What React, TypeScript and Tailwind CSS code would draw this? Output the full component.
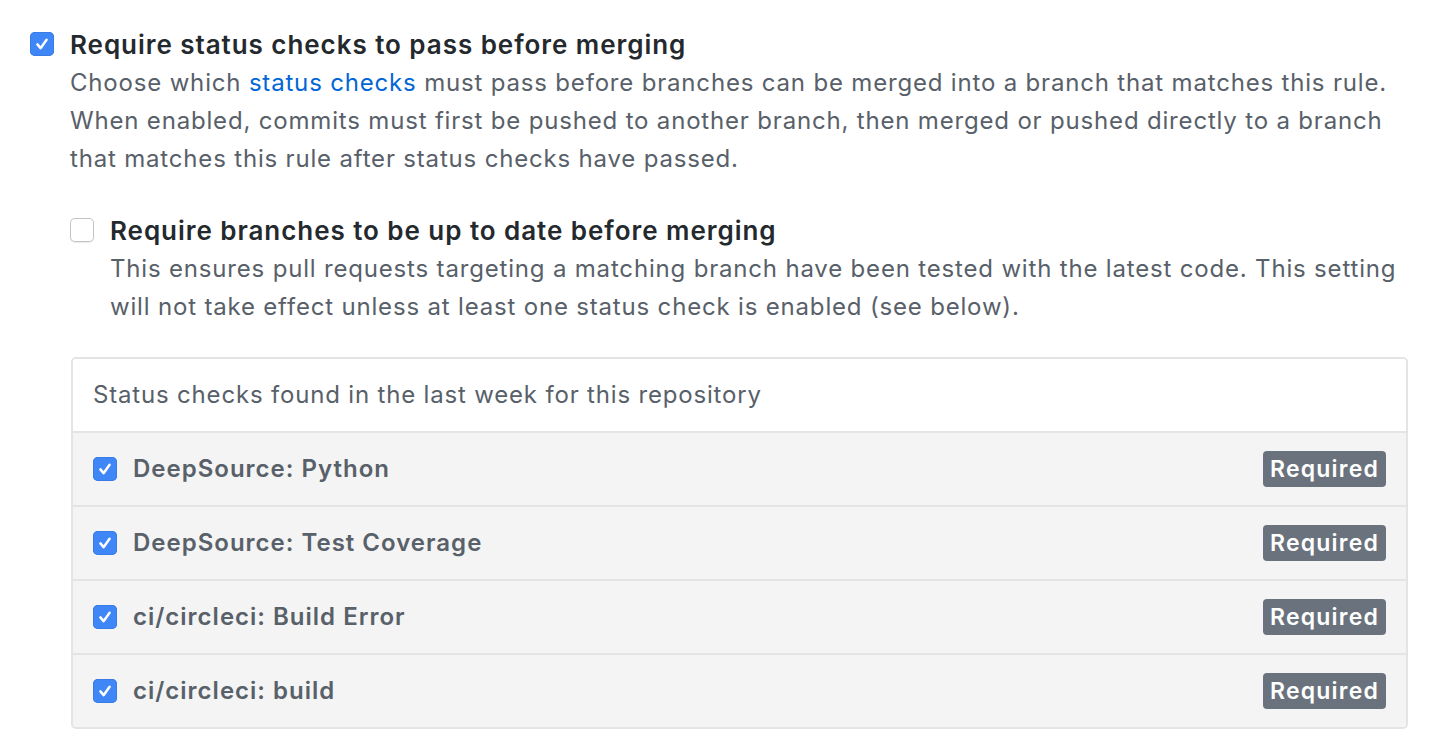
import React from 'react';

const Check = ({ checked, size = 24 }: { checked: boolean; size?: number }) => (
    <span
        className={
            checked
                ? 'flex shrink-0 items-center justify-center rounded-[5px] bg-[#3f86f7] shadow-[inset_0_0_0_1px_#3a7ce6]'
                : 'flex shrink-0 items-center justify-center rounded-[5px] bg-white shadow-[inset_0_0_0_1px_#c3c3c3,0_1px_1px_rgba(0,0,0,0.08)]'
        }
        style={{ width: size, height: size }}
    >
        {checked && (
            <svg viewBox="0 0 24 24" className="size-[20px]" fill="none" stroke="white" strokeWidth="3" strokeLinecap="round" strokeLinejoin="round">
                <path d="M6.5 12.5l3.8 4.5 7.2-10" />
            </svg>
        )}
    </span>
);

const checks = [
    'DeepSource: Python',
    'DeepSource: Test Coverage',
    'ci/circleci: Build Error',
    'ci/circleci: build',
];

export default function App() {
    return (
        <div className="min-h-[750px] bg-white pl-[30px] pt-[26px] font-['Inter','Liberation_Sans',sans-serif] text-[24px] leading-[38px] text-[#586069] tracking-[0.82px]">
            {/* Require status checks */}
            <div className="flex gap-4">
                <div className="pt-[6px]"><Check checked /></div>
                <div>
                    <div className="text-[26px] font-semibold text-[#24292e] leading-[38px] tracking-[0.95px]">
                        Require status checks to pass before merging
                    </div>
                    <div className="whitespace-nowrap">
                        <div>Choose which <span className="text-[#0366d6]">status checks</span> must pass before branches can be merged into a branch that matches this rule.</div>
                        <div>When enabled, commits must first be pushed to another branch, then merged or pushed directly to a branch</div>
                        <div>that matches this rule after status checks have passed.</div>
                    </div>

                    {/* Up to date */}
                    <div className="mt-[34px] flex gap-4">
                        <div className="pt-[6px]"><Check checked={false} /></div>
                        <div>
                            <div className="text-[26px] font-semibold text-[#24292e] tracking-[0.95px]">
                                Require branches to be up to date before merging
                            </div>
                            <div className="whitespace-nowrap">
                                <div>This ensures pull requests targeting a matching branch have been tested with the latest code. This setting</div>
                                <div>will not take effect unless at least one status check is enabled (see below).</div>
                            </div>
                        </div>
                    </div>

                    {/* Status checks list */}
                    <div className="mt-[31px] ml-px w-[1337px] overflow-hidden rounded-[5px] border-2 border-[#e4e4e4]">
                        <div className="flex h-[72px] items-center bg-white px-5">
                            Status checks found in the last week for this repository
                        </div>
                        {checks.map((name) => (
                            <div key={name} className="flex h-[74px] items-center border-t-2 border-[#e4e4e4] bg-[#f4f4f4] pl-5 pr-5">
                                <Check checked />
                                <span className="ml-[16px] font-semibold tracking-[1px] text-[#586069]">{name}</span>
                                <span className="ml-auto rounded-[4px] bg-[#6a737d] px-[7px] text-[23px] font-semibold leading-[36px] tracking-[1.2px] text-white">
                                    Required
                                </span>
                            </div>
                        ))}
                    </div>
                </div>
            </div>
        </div>
    );
}
